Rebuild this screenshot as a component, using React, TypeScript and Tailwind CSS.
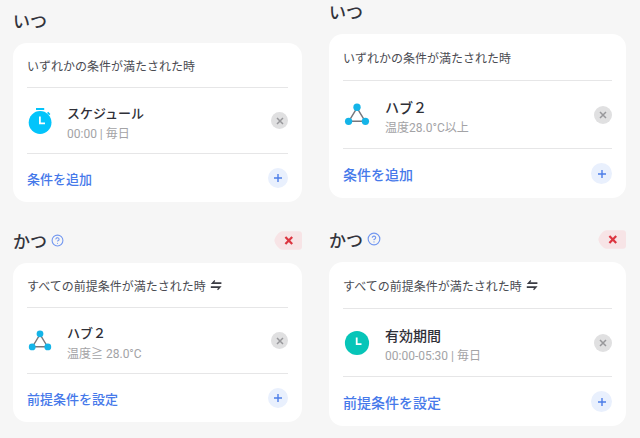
import { CircleHelp } from "lucide-react";

type IconKind = "timer" | "hub" | "clock";
type Size = "sm" | "lg";

interface SectionData {
  heading: string;
  optional?: boolean;
  rule: string;
  icon: IconKind;
  name: string;
  detail: string;
  action: string;
}

const scheduleScene: SectionData[] = [
  {
    heading: "いつ",
    rule: "いずれかの条件が満たされた時",
    icon: "timer",
    name: "スケジュール",
    detail: "00:00 | 毎日",
    action: "条件を追加",
  },
  {
    heading: "かつ",
    optional: true,
    rule: "すべての前提条件が満たされた時",
    icon: "hub",
    name: "ハブ２",
    detail: "温度≧ 28.0°C",
    action: "前提条件を設定",
  },
];

const temperatureScene: SectionData[] = [
  {
    heading: "いつ",
    rule: "いずれかの条件が満たされた時",
    icon: "hub",
    name: "ハブ２",
    detail: "温度28.0°C以上",
    action: "条件を追加",
  },
  {
    heading: "かつ",
    optional: true,
    rule: "すべての前提条件が満たされた時",
    icon: "clock",
    name: "有効期間",
    detail: "00:00-05:30 | 毎日",
    action: "前提条件を設定",
  },
];

const styles = {
  sm: {
    column: "pt-[10px] gap-[28px]",
    help: "size-[13px]",
    rule: "h-[45px]",
    row: "h-[66px] gap-[14px]",
    icon: "size-[26px]",
    name: "text-[13px]",
    close: "size-[17px]",
    footer: "h-12",
    action: "text-[13px]",
    plus: "size-5",
  },
  lg: {
    column: "pt-[1px] gap-[31px]",
    help: "size-[14px]",
    rule: "h-[47px]",
    row: "h-[68px] gap-[14px]",
    icon: "size-[28px]",
    name: "text-[14px]",
    close: "size-[18px]",
    footer: "h-[49px]",
    action: "text-[14px]",
    plus: "size-[21px]",
  },
};

function ItemIcon({ kind, className }: { kind: IconKind; className: string }) {
  if (kind === "hub") {
    return (
      <svg viewBox="0 0 26 26" className={className} aria-hidden="true">
        <path d="M13 6.4 5.5 18.7h15z" fill="none" stroke="#77777c" strokeWidth="1.4" />
        <circle cx="13" cy="5.8" r="3.4" fill="#14b4e8" />
        <circle cx="5.2" cy="18.9" r="3.4" fill="#14b4e8" />
        <circle cx="20.8" cy="18.9" r="3.4" fill="#14b4e8" />
      </svg>
    );
  }
  if (kind === "clock") {
    return (
      <svg viewBox="0 0 28 28" className={className} aria-hidden="true">
        <circle cx="14" cy="14" r="12.1" fill="#07c5b8" />
        <path d="M13.7 8.6v6.6h4.8" fill="none" stroke="#fff" strokeWidth="1.8" />
      </svg>
    );
  }
  return (
    <svg viewBox="0 0 26 26" className={className} aria-hidden="true">
      <path d="M9 0h8.2v2H9z" fill="#03c4fb" />
      <path d="m20.6 4.4 2.2 2.2" stroke="#03c4fb" strokeWidth="1.6" />
      <circle cx="13.1" cy="14.5" r="11.4" fill="#03c4fb" />
      <path d="M12.9 8.5v6.9h5.1" fill="none" stroke="#fff" strokeWidth="1.8" />
    </svg>
  );
}

function Section({ data, size }: { data: SectionData; size: Size }) {
  const s = styles[size];
  return (
    <section>
      <div className="flex items-center justify-between pb-[9px]">
        <div className="flex items-center gap-1">
          <h2 className="text-[17px] font-medium leading-6 text-[#33343c]">{data.heading}</h2>
          {data.optional && (
            <button type="button" aria-label="ヘルプ" className="pb-1 text-[#7398f0]">
              <CircleHelp className={s.help} strokeWidth={2} />
            </button>
          )}
        </div>
        {data.optional && (
          <button type="button" aria-label="削除" className="pb-1">
            <svg viewBox="0 0 28 19" className="h-[19px] w-7" aria-hidden="true">
              <path
                d="M8.5 .3H25a3 3 0 0 1 3 3V15.7a3 3 0 0 1-3 3H8.5C5 18.7 .4 12.5 .4 9.5S5 .3 8.5 .3Z"
                fill="#f7e4e6"
              />
              <path d="m11.4 6 6.8 7m0-7-6.8 7" stroke="#dc3540" strokeWidth="2.2" />
            </svg>
          </button>
        )}
      </div>

      <div className="rounded-[14px] bg-white px-[14px]">
        <div className={`flex items-center gap-1 border-b border-[#e6e6e7] pt-1 ${s.rule}`}>
          <p className="text-xs text-[#4a4b52]">{data.rule}</p>
          {data.optional && (
            <button type="button" aria-label="切り替え" className="pb-1">
              <svg viewBox="0 0 12 12" className="size-3" aria-hidden="true">
                <path
                  d="M.8 4.9 4.4 .9l.9 1-1.1 1.3H11.4v1.7ZM11.6 7.3 8 11.3l-.9-1L8.2 9H.8V7.3Z"
                  fill="#3a3b43"
                />
              </svg>
            </button>
          )}
        </div>

        <div className={`flex items-center border-b border-[#e6e6e7] ${s.row}`}>
          <ItemIcon kind={data.icon} className={`shrink-0 ${s.icon}`} />
          <div className="grow pt-[7px]">
            <h3 className={`font-medium leading-5 text-[#2f3038] ${s.name}`}>{data.name}</h3>
            <p className="text-xs leading-5 text-[#a3a3a6]">{data.detail}</p>
          </div>
          <button
            type="button"
            aria-label={`${data.name}を削除`}
            className={`flex shrink-0 items-center justify-center rounded-full bg-[#e0e0e1] ${s.close}`}
          >
            <svg viewBox="0 0 8 8" className="size-2" aria-hidden="true">
              <path d="m1 1 6 6m0-6L1 7" stroke="#98989b" strokeWidth="1.5" />
            </svg>
          </button>
        </div>

        <button type="button" className={`flex w-full items-center justify-between ${s.footer}`}>
          <span className={`pt-1 font-medium text-[#4679ea] ${s.action}`}>{data.action}</span>
          <span
            className={`flex items-center justify-center rounded-full bg-[#e9f0fd] ${s.plus}`}
          >
            <svg viewBox="0 0 8 8" className="size-2" aria-hidden="true">
              <path d="M4 0v8M0 4h8" stroke="#4c7de8" strokeWidth="1.4" />
            </svg>
          </span>
        </button>
      </div>
    </section>
  );
}

function Scene({ sections, size }: { sections: SectionData[]; size: Size }) {
  return (
    <div className={`flex flex-col ${styles[size].column}`}>
      {sections.map((data) => (
        <Section key={data.heading} data={data} size={size} />
      ))}
    </div>
  );
}

export default function App() {
  return (
    <main
      lang="ja"
      className="grid min-h-screen grid-cols-[289fr_297fr] items-start gap-[27px] bg-[#f6f6f6] pr-[14px] pl-[13px] font-[Roboto,'Noto_Sans_CJK_JP',sans-serif]"
    >
      <Scene sections={scheduleScene} size="sm" />
      <Scene sections={temperatureScene} size="lg" />
    </main>
  );
}
